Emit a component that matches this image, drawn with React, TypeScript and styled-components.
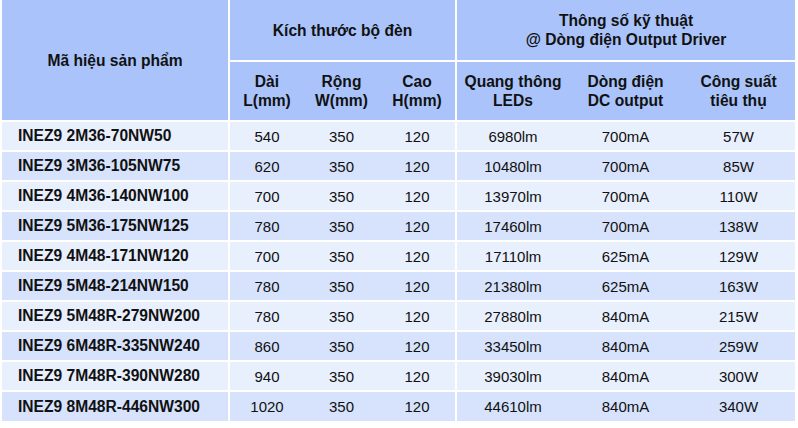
import styled, { createGlobalStyle } from 'styled-components';

const rows = [
	['INEZ9 2M36-70NW50', '540', '350', '120', '6980lm', '700mA', '57W'],
	['INEZ9 3M36-105NW75', '620', '350', '120', '10480lm', '700mA', '85W'],
	['INEZ9 4M36-140NW100', '700', '350', '120', '13970lm', '700mA', '110W'],
	['INEZ9 5M36-175NW125', '780', '350', '120', '17460lm', '700mA', '138W'],
	['INEZ9 4M48-171NW120', '700', '350', '120', '17110lm', '625mA', '129W'],
	['INEZ9 5M48-214NW150', '780', '350', '120', '21380lm', '625mA', '163W'],
	['INEZ9 5M48R-279NW200', '780', '350', '120', '27880lm', '840mA', '215W'],
	['INEZ9 6M48R-335NW240', '860', '350', '120', '33450lm', '840mA', '259W'],
	['INEZ9 7M48R-390NW280', '940', '350', '120', '39030lm', '840mA', '300W'],
	['INEZ9 8M48R-446NW300', '1020', '350', '120', '44610lm', '840mA', '340W'],
];

const widths = [227, 75, 75, 77, 113, 113, 113];

export default function App() {
	return (
		<>
			<GlobalStyle />
			<Page>
				<Table>
					<colgroup>
						{widths.map((w, i) => (
							<col key={i} style={{ width: w }} />
						))}
					</colgroup>
					<thead>
						<HeadRow $height={61}>
							<Th rowSpan={2} $divider>
								Mã hiệu sản phẩm
							</Th>
							<Th colSpan={3} $divider>
								Kích thước bộ đèn
							</Th>
							<Th colSpan={3}>
								Thông số kỹ thuật
								<br />@ Dòng điện Output Driver
							</Th>
						</HeadRow>
						<HeadRow $height={60}>
							<Th>
								Dài
								<br />
								L(mm)
							</Th>
							<Th>
								Rộng
								<br />
								W(mm)
							</Th>
							<Th $divider>
								Cao
								<br />
								H(mm)
							</Th>
							<Th>
								Quang thông
								<br />
								LEDs
							</Th>
							<Th>
								Dòng điện
								<br />
								DC output
							</Th>
							<Th>
								Công suất
								<br />
								tiêu thụ
							</Th>
						</HeadRow>
					</thead>
					<tbody>
						{rows.map((r, i) => (
							<BodyRow key={r[0]} $alt={i % 2 === 1}>
								<Code $divider>{r[0]}</Code>
								<Td>{r[1]}</Td>
								<Td>{r[2]}</Td>
								<Td $divider>{r[3]}</Td>
								<Td>{r[4]}</Td>
								<Td>{r[5]}</Td>
								<Td>{r[6]}</Td>
							</BodyRow>
						))}
					</tbody>
				</Table>
			</Page>
		</>
	);
}

const GlobalStyle = createGlobalStyle`
	body {
		margin: 0;
		background: #ffffff;
		font-family: 'Liberation Sans', Arial, sans-serif;
		color: #111111;
	}
`;

const Page = styled.div`
	padding: 0 0 0 2px;
`;

const Table = styled.table`
	width: 793px;
	table-layout: fixed;
	border-collapse: collapse;
	font-size: 15px;
`;

const HeadRow = styled.tr<{ $height: number }>`
	height: ${({ $height }) => $height}px;
	background: #aac4fb;
	border-bottom: 2px solid #ffffff;
`;

const Th = styled.th<{ $divider?: boolean }>`
	font-weight: bold;
	font-size: 15.6px;
	text-align: center;
	vertical-align: middle;
	line-height: 19px;
	padding: 0;
	border-right: ${({ $divider }) => ($divider ? '2px solid #ffffff' : 'none')};
`;

const BodyRow = styled.tr<{ $alt: boolean }>`
	height: 30px;
	background: ${({ $alt }) => ($alt ? '#d7e3fc' : '#e8effd')};
	border-bottom: 2px solid #ffffff;

	&:last-child {
		border-bottom: none;
	}
`;

const Td = styled.td<{ $divider?: boolean }>`
	text-align: center;
	padding: 0;
	border-right: ${({ $divider }) => ($divider ? '2px solid #ffffff' : 'none')};
`;

const Code = styled(Td)`
	text-align: left;
	font-weight: bold;
	font-size: 15.6px;
	padding-left: 16px;
`;
